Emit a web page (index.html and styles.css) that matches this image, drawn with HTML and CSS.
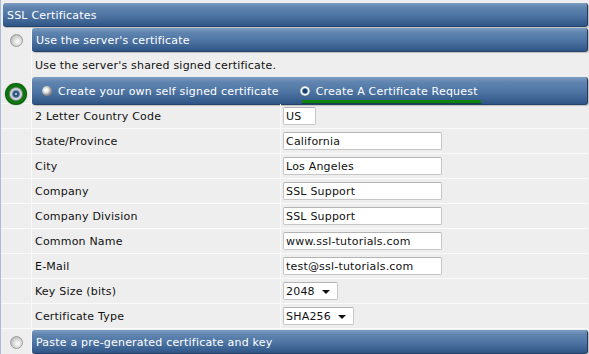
FILE: index.html
```html
<!DOCTYPE html>
<html>
<head>
<meta charset="utf-8">
<link rel="stylesheet" href="styles.css">
</head>
<body>
<div class="panel">
  <div class="bar head">SSL Certificates</div>

  <div class="opt">
    <div class="sel"><span class="radio"></span></div>
    <div class="bar">Use the server's certificate</div>
  </div>

  <div class="opt desc">
    <div class="sel"></div>
    <div class="text">Use the server's shared signed certificate.</div>
  </div>

  <div class="opt big">
    <div class="sel ringcell"><span class="ring"></span></div>
    <div class="bar sub">
      <span class="choice"><span class="mini"></span>Create your own self signed certificate</span>
      <span class="choice active"><span class="mini on"></span>Create A Certificate Request</span>
    </div>
  </div>

  <div class="form">
    <div class="frow"><div class="sel"></div><div class="lbl">2 Letter Country Code</div><div class="fld"><input class="inp short" value="US"></div></div>
    <div class="frow"><div class="sel"></div><div class="lbl">State/Province</div><div class="fld"><input class="inp" value="California"></div></div>
    <div class="frow"><div class="sel"></div><div class="lbl">City</div><div class="fld"><input class="inp" value="Los Angeles"></div></div>
    <div class="frow"><div class="sel"></div><div class="lbl">Company</div><div class="fld"><input class="inp" value="SSL Support"></div></div>
    <div class="frow"><div class="sel"></div><div class="lbl">Company Division</div><div class="fld"><input class="inp" value="SSL Support"></div></div>
    <div class="frow"><div class="sel"></div><div class="lbl">Common Name</div><div class="fld"><input class="inp" value="www.ssl-tutorials.com"></div></div>
    <div class="frow"><div class="sel"></div><div class="lbl">E-Mail</div><div class="fld"><input class="inp" value="test@ssl-tutorials.com"></div></div>
    <div class="frow"><div class="sel"></div><div class="lbl">Key Size (bits)</div><div class="fld"><span class="dd w54">2048<span class="arr"></span></span></div></div>
    <div class="frow"><div class="sel"></div><div class="lbl">Certificate Type</div><div class="fld"><span class="dd w71">SHA256<span class="arr"></span></span></div></div>
  </div>

  <div class="opt last">
    <div class="sel"><span class="radio"></span></div>
    <div class="bar">Paste a pre-generated certificate and key</div>
  </div>
</div>
</body>
</html>
```

FILE: styles.css
```css
* { box-sizing: border-box; }
html, body { margin: 0; padding: 0; }
body {
  width: 589px;
  height: 354px;
  overflow: hidden;
  background: #eeeeee;
  font-family: "DejaVu Sans", Verdana, sans-serif;
  font-size: 11px;
  letter-spacing: 0.2px;
  color: #111;
}
.panel {
  border-left: 1px solid #a9bdd6;
  padding: 3px 1px 0 0;
  min-height: 354px;
}
.bar {
  display: flex;
  align-items: center;
  padding-left: 4px;
  padding-top: 1px;
  color: #fff;
  background: linear-gradient(to bottom, #7d9dc3 0%, #6185b0 18%, #5077a5 50%, #3f6595 78%, #2f5586 100%);
  border-radius: 3px;
  border-right: 1px solid #1f3a5e;
  border-bottom: 1px solid #26446b;
  box-shadow: 1px 1px 1px rgba(0,0,0,0.2);
  white-space: nowrap;
}
.head {
  margin-left: 2px;
  height: 24px;
  margin-bottom: 1px;
  padding-left: 4px;
}
.opt {
  display: grid;
  grid-template-columns: 31px 1fr;
  height: 24px;
  margin-bottom: 1px;
}
.opt.desc { height: 23px; }
.opt.big { height: 27px; margin-bottom: 0; border-bottom: 1px solid #fafafa; }
.opt.last { height: 24px; margin-top: 1px; }
.sel {
  display: flex;
  align-items: center;
  justify-content: center;
  border-right: 1px solid #fafafa;
}
.text {
  display: flex;
  align-items: center;
  padding-left: 3px;
  padding-top: 1px;
}
.radio {
  width: 13px;
  height: 13px;
  border-radius: 50%;
  border: 1px solid #9c9c9c;
  background: radial-gradient(circle at 60% 60%, #ffffff 0, #eeeeee 2px, #d0d0d0 5px, #bcbcbc 7px);
}
.ringcell { align-items: flex-start; padding-top: 6px; }
.ring {
  width: 22px;
  height: 22px;
  border-radius: 50%;
  background: radial-gradient(circle at 50% 50%, #9fc0dd 0 1px, #2e4f75 1.6px, #3f6187 3px, #8aa0b6 3.8px, #d4dadf 4.6px, #c2c8cd 5.6px, #7c8a86 6.4px, #0f700f 7.4px, #0b7c0b 9px, #055405 11px);
  box-shadow: 0 0 1px rgba(0,60,0,0.6);
}
.sub { padding-left: 10px; gap: 21px; }
.choice {
  display: flex;
  align-items: center;
  gap: 6px;
  position: relative;
}
.mini {
  width: 10px;
  height: 10px;
  border-radius: 50%;
  background: radial-gradient(circle at 40% 40%, #ffffff 0 1px, #e2e2e2 2.5px, #b8b8b8 4px, #8d8d8d 5px);
}
.mini.on {
  background: radial-gradient(circle at 50% 50%, #1c3d66 0 1.8px, #5f93c8 2.6px, #ffffff 3.4px, #e6e6e6 4.3px, #9aa3ad 5px);
}
.active::after {
  content: "";
  position: absolute;
  left: 2px;
  right: -3px;
  bottom: -5px;
  height: 3px;
  background: #108210;
  box-shadow: 0 1px 1px rgba(0,40,0,0.5);
}
.form { display: flex; flex-direction: column; }
.frow {
  display: grid;
  grid-template-columns: 31px 249px 1fr;
  height: 25px;
  border-bottom: 1px solid #fafafa;
}
.lbl {
  display: flex;
  align-items: center;
  padding-left: 3px;
  padding-top: 1px;
  border-right: 1px solid #fafafa;
}
.fld {
  display: flex;
  align-items: center;
  padding-left: 2px;
}
.inp {
  width: 159px;
  height: 18px;
  border: 1px solid #c6c6c6;
  border-top-color: #b4b4b4;
  border-radius: 2px;
  background: #fff;
  font-family: "DejaVu Sans", Verdana, sans-serif;
  font-size: 11px;
  letter-spacing: 0.2px;
  color: #111;
  padding: 0 0 0 2px;
  margin: 0;
  outline: none;
}
.inp.short { width: 33px; }
.dd {
  display: flex;
  align-items: center;
  height: 18px;
  padding-left: 2px;
  background: #fff;
  border: 1px solid #c6c6c6;
  border-top-color: #b4b4b4;
  border-radius: 2px;
  position: relative;
}
.w54 { width: 55px; }
.w71 { width: 71px; }
.arr {
  position: absolute;
  right: 7px;
  top: 7px;
  width: 0;
  height: 0;
  border-left: 4px solid transparent;
  border-right: 4px solid transparent;
  border-top: 4px solid #111;
}
```
